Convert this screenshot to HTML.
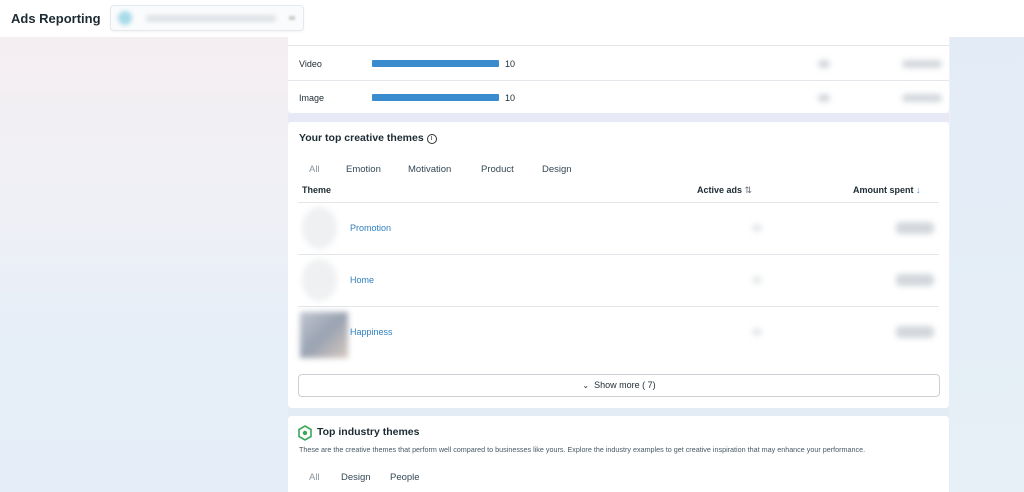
<!DOCTYPE html>
<html><head><meta charset="utf-8"><style>
*{margin:0;padding:0;box-sizing:border-box}
html,body{width:1024px;height:492px;overflow:hidden}
body{font-family:"Liberation Sans",sans-serif;position:relative;
background:linear-gradient(180deg,#f6eef1 0%,#eef0f6 45%,#e6eef8 70%,#e5eef8 100%)}
.rightbg{position:absolute;left:950px;top:37px;width:74px;height:455px;background:linear-gradient(180deg,#e3ebf7,#e6f0f6)}
.gap{position:absolute;left:288px;width:661px;background:#e8e9f6}
.hdr{position:absolute;left:0;top:0;width:1024px;height:37px;background:#fff}
.title{position:absolute;left:11px;top:11px;font-size:13px;font-weight:bold;color:#1c2b33}
.picker{position:absolute;left:110px;top:5px;width:194px;height:26px;border:1px solid #e6e9ec;border-radius:4px;background:#fafbfc;box-shadow:0 1px 2px rgba(0,0,0,.05)}
.picker .dot{position:absolute;left:7px;top:5px;width:14px;height:14px;border-radius:50%;background:#a8dbe8;filter:blur(2px)}
.picker .bar{position:absolute;left:35px;top:9px;width:130px;height:7px;background:#dfe3e7;filter:blur(2px);border-radius:3px}
.card{position:absolute;left:288px;width:661px;background:#fff;border-radius:4px}
.t{position:absolute;font-size:9px;color:#1c2b33}
.line{position:absolute;left:0;right:0;height:1px;background:#e3e6ea}
.pbar{position:absolute;left:84px;width:127px;height:7px;background:#3b8ccf;border-radius:1px}
.blur{position:absolute;background:#d3d7dc;filter:blur(3px);border-radius:4px}
.tab{position:absolute;font-size:9.5px;color:#344854}
.link{position:absolute;font-size:9px;color:#2f7fc1}
.thumb{position:absolute;left:14px;width:35px;height:42px;border-radius:50%;background:#eef0f2;filter:blur(3px)}
</style></head><body>
<div class="rightbg"></div>
<div class="gap" style="top:113px;height:9px"></div>
<div class="gap" style="top:408px;height:8px;background:#e3ecf4"></div>
<div class="hdr"><div class="title">Ads Reporting</div>
<div class="picker"><div class="dot"></div><div class="bar"></div><div style="position:absolute;left:178px;top:10px;width:6px;height:4px;background:#ccc;filter:blur(1px)"></div></div></div>

<div class="card" style="top:37px;height:76px;border-radius:0 0 4px 4px">
<div class="line" style="top:8px"></div>
<div class="t" style="left:11px;top:22px">Video</div><div class="pbar" style="top:23px"></div><div class="t" style="left:217px;top:22px">10</div>
<div class="blur" style="left:530px;top:23px;width:12px;height:8px"></div><div class="blur" style="left:614px;top:23px;width:40px;height:8px"></div>
<div class="line" style="top:43px"></div>
<div class="t" style="left:11px;top:56px">Image</div><div class="pbar" style="top:57px"></div><div class="t" style="left:217px;top:56px">10</div>
<div class="blur" style="left:530px;top:57px;width:12px;height:8px"></div><div class="blur" style="left:614px;top:57px;width:40px;height:8px"></div>
</div>

<div class="card" style="top:122px;height:286px">
<div class="t" style="left:11px;top:10px;font-size:10.5px;font-weight:bold">Your top creative themes <span style="display:inline-block;width:10px;height:10px;border:1px solid #333;border-radius:50%;font-size:7px;text-align:center;line-height:8px;font-weight:normal;vertical-align:1px">i</span></div>
<div class="tab" style="left:21px;top:42px;color:#8a959d">All</div>
<div class="tab" style="left:58px;top:42px">Emotion</div>
<div class="tab" style="left:120px;top:42px">Motivation</div>
<div class="tab" style="left:193px;top:42px">Product</div>
<div class="tab" style="left:254px;top:42px">Design</div>
<div class="t" style="left:14px;top:63px;font-weight:bold">Theme</div>
<div class="t" style="left:409px;top:63px;font-weight:bold">Active ads <span style="color:#667;font-weight:normal">⇅</span></div>
<div class="t" style="left:565px;top:63px;font-weight:bold">Amount spent <span style="color:#3b8ccf">↓</span></div>
<div class="line" style="top:80px;left:10px;right:10px"></div>
<div class="thumb" style="top:85px"></div><div class="link" style="left:62px;top:101px">Promotion</div>
<div class="blur" style="left:464px;top:102px;width:10px;height:8px;background:#e6e8eb"></div><div class="blur" style="left:608px;top:100px;width:38px;height:12px"></div>
<div class="line" style="top:132px;left:10px;right:10px"></div>
<div class="thumb" style="top:137px"></div><div class="link" style="left:62px;top:153px">Home</div>
<div class="blur" style="left:464px;top:154px;width:10px;height:8px;background:#e6e8eb"></div><div class="blur" style="left:608px;top:152px;width:38px;height:12px"></div>
<div class="line" style="top:184px;left:10px;right:10px"></div>
<div style="position:absolute;left:12px;top:190px;width:48px;height:46px;background:linear-gradient(135deg,#c0c6d0,#9aa3b2 50%,#d6c8c0);filter:blur(3px)"></div>
<div class="link" style="left:62px;top:205px">Happiness</div>
<div class="blur" style="left:464px;top:206px;width:10px;height:8px;background:#e6e8eb"></div><div class="blur" style="left:608px;top:204px;width:38px;height:12px"></div>
<div style="position:absolute;left:10px;top:252px;width:642px;height:23px;border:1px solid #ccd0d5;border-radius:4px;text-align:center;font-size:9px;line-height:21px;color:#1c2b33"><span style="font-size:8px">⌄</span>&nbsp; Show more ( 7)</div>
</div>

<div class="card" style="top:416px;height:80px">
<svg style="position:absolute;left:10px;top:9px" width="14" height="16" viewBox="0 0 14 16"><path d="M7 1 L13 4.5 V11.5 L7 15 L1 11.5 V4.5 Z" fill="#fff" stroke="#3aa757" stroke-width="1.6"/><circle cx="7" cy="8" r="2.2" fill="#3aa757"/></svg>
<div class="t" style="left:29px;top:10px;font-size:10.5px;font-weight:bold">Top industry themes</div>
<div class="t" style="left:11px;top:29px;font-size:7.2px;color:#465a66">These are the creative themes that perform well compared to businesses like yours. Explore the industry examples to get creative inspiration that may enhance your performance.</div>
<div class="tab" style="left:21px;top:56px;color:#8a959d">All</div>
<div class="tab" style="left:53px;top:56px">Design</div>
<div class="tab" style="left:102px;top:56px">People</div>
</div>
</body></html>
